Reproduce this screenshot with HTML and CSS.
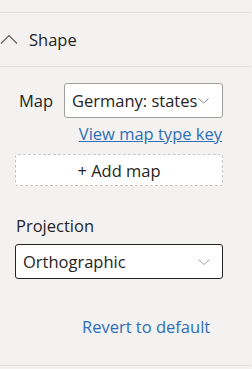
FILE: index.html
```html
<!DOCTYPE html>
<html lang="en">
<head>
    <meta charset="UTF-8">
    <title>Shape pane</title>
    <link rel="stylesheet" href="styles.css">
</head>
<body>
    <div class="pane">
        <div class="card-header">
            <svg class="chev-up" width="18" height="10" viewBox="0 0 18 10"><path d="M1 9.5 L9 1.5 L17 9.5" fill="none" stroke="#605e5c" stroke-width="1.1"/></svg>
            <span class="card-title">Shape</span>
        </div>
        <div class="card-body">
            <div class="map-row">
                <span class="label">Map</span>
                <div class="dropdown small">
                    <span class="value">Germany: states</span>
                    <svg class="chev" width="11" height="6" viewBox="0 0 11 6"><path d="M0.5 0.5 L5.5 5 L10.5 0.5" fill="none" stroke="#8a8886" stroke-width="1"/></svg>
                </div>
            </div>
            <div class="key-link"><a href="#">View map type key</a></div>
            <div class="add-map">+ Add map</div>
            <div class="label proj">Projection</div>
            <div class="dropdown wide">
                <span class="value">Orthographic</span>
                <svg class="chev" width="12" height="6" viewBox="0 0 12 6"><path d="M0.5 0.5 L6 5.5 L11.5 0.5" fill="none" stroke="#a19f9d" stroke-width="1"/></svg>
            </div>
            <div class="revert"><a href="#">Revert to default</a></div>
        </div>
    </div>
</body>
</html>
```
FILE: styles.css
```css
html, body { margin: 0; padding: 0; background-color: #f3f2f1; }
body { font-family: "Open Sans", "Noto Sans", sans-serif; font-size: 16.5px; color: #252423; }

.pane { width: 251px; margin-top: 12px; border-top: 1px solid #e1dfdd; border-bottom: 1px solid #e1dfdd; }

/* header with collapse chevron */
.card-header { height: 53px; display: flex; align-items: center; border-bottom: 1px solid #e1dfdd; }
.chev-up { margin-left: 0; margin-top: -2px; }
.card-title { margin-left: 11px; line-height: 20px; }

.card-body { padding: 0 28px 28px 15px; }

.label { line-height: 20px; }

.map-row { margin-top: 16px; display: flex; align-items: center; padding-left: 4px; }
.map-row .label { width: 45px; }

.dropdown { box-sizing: border-box; height: 35px; background: #fff; border-radius: 3px; display: flex; align-items: center; }
.dropdown .value { line-height: 20px; white-space: nowrap; }
.dropdown.small { width: 159px; border: 1px solid #a19f9d; padding-left: 7px; overflow: hidden; }
.dropdown.small .chev { margin-left: 1px; flex: none; }
.dropdown.wide { width: 208px; margin-top: 8px; border: 1px solid #252423; padding-left: 7px; justify-content: space-between; padding-right: 12px; }

.key-link { margin-top: 6px; text-align: right; line-height: 20px; padding-right: 1px; }
.key-link a { color: #2f6db5; text-decoration: underline; }

.add-map { box-sizing: border-box; margin-top: 10px; height: 32px; width: 208px; background: #fff; border: 1px dashed #c8c6c4; border-radius: 3px; display: flex; align-items: center; justify-content: center; }

.proj { margin-top: 30px; padding-left: 1px; }

.revert { margin-top: 38px; line-height: 20px; padding-left: 67px; }
.revert a { color: #2f6db5; text-decoration: none; }
```
